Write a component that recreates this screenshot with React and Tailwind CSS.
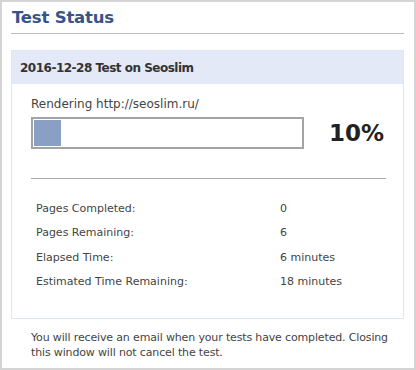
export default function App() {
  return (
    <div className="w-[416px] h-[370px] bg-white border-2 border-[#d4d4d4] px-[9px] pt-[2px] font-['DejaVu_Sans',Verdana,sans-serif]">
      <h1 className="text-[16.5px] font-bold text-[#36538a] pl-[1px] leading-[28px] tracking-[-0.2px]">Test Status</h1>
      <div className="border-t border-[#bdbdbd] mt-[1px] mr-[1px]" />

      <div className="mt-[16px] mr-[1px] border border-[#dfe5f3]">
        <div className="bg-[#e3e9f6] h-[33px] flex items-center px-[8px] text-[12px] font-bold text-[#333] tracking-[-0.5px]">
          2016-12-28 Test on Seoslim
        </div>
        <div className="px-[19px] pt-[12px] pb-[28px]">
          <p className="text-[12px] text-[#444] leading-[16px]">Rendering http://seoslim.ru/</p>
          <div className="flex items-center mt-[4px]">
            <div className="w-[277px] h-[32px] border-2 border-[#a3a3a3] p-[1px]">
              <div className="h-full bg-[#8a9fc4]" style={{ width: '10%' }} />
            </div>
            <span className="ml-[25px] text-[23px] font-bold text-[#222]">10%</span>
          </div>
          <div className="border-t border-[#a8a8a8] mt-[27px] mr-[-2px]" />
          <div className="mt-[22px] pl-[5px] text-[11px] text-[#444] grid grid-cols-[244px_1fr] gap-y-[8.5px] leading-[16px]">
            <span>Pages Completed:</span>
            <span>0</span>
            <span>Pages Remaining:</span>
            <span>6</span>
            <span>Elapsed Time:</span>
            <span>6 minutes</span>
            <span>Estimated Time Remaining:</span>
            <span>18 minutes</span>
          </div>
        </div>
      </div>

      <p className="mt-[11px] pl-[20px] pr-0 text-[11px] leading-[15px] text-[#444] tracking-[-0.15px]">
        You will receive an email when your tests have completed. Closing this window will not cancel the test.
      </p>
    </div>
  );
}
